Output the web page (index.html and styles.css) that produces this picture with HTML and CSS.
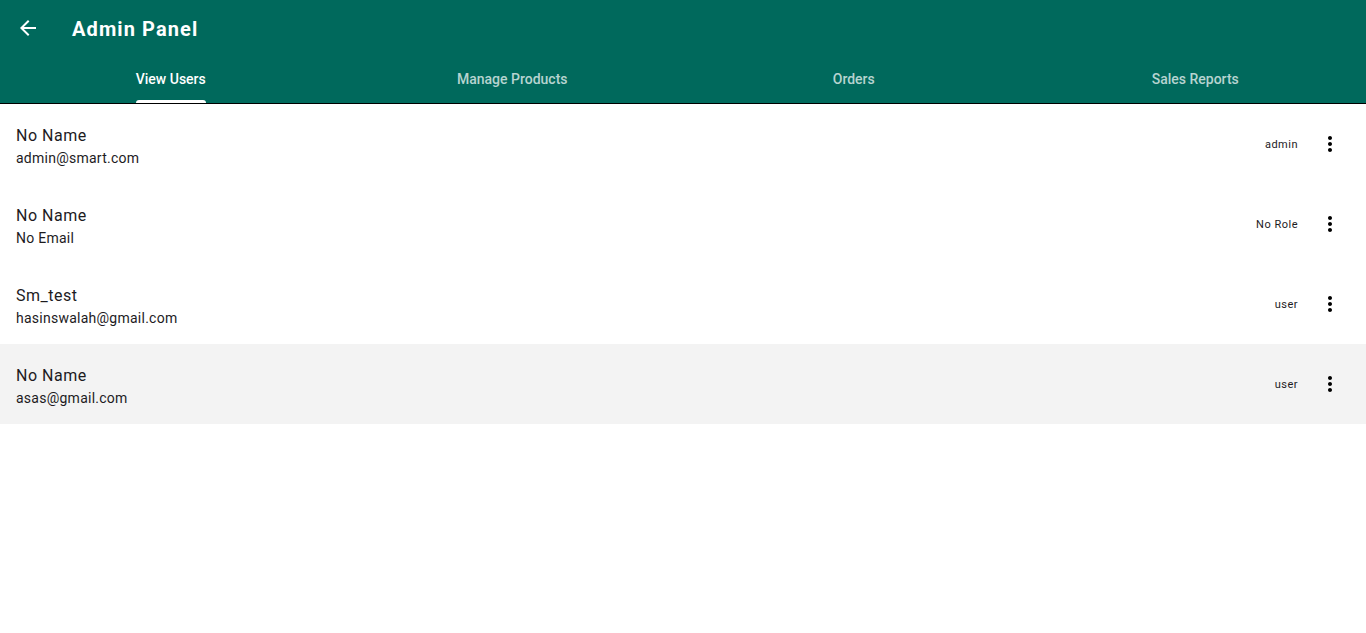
FILE: index.html
```html
<!DOCTYPE html>
<html>
<head>
<meta charset="utf-8">
<link rel="stylesheet" href="styles.css">
</head>
<body>
<header class="appbar">
  <div class="toolbar">
    <button class="back" aria-label="Back">
      <svg width="24" height="24" viewBox="0 0 24 24"><path d="M20 11H7.83l5.59-5.59L12 4l-8 8 8 8 1.41-1.41L7.83 13H20v-2z" fill="#fff"/></svg>
    </button>
    <h1 class="title">Admin Panel</h1>
  </div>
  <nav class="tabs">
    <div class="tab active"><span class="tab-label">View Users<span class="indicator"></span></span></div>
    <div class="tab"><span class="tab-label">Manage Products</span></div>
    <div class="tab"><span class="tab-label">Orders</span></div>
    <div class="tab"><span class="tab-label">Sales Reports</span></div>
  </nav>
</header>
<main class="list">
  <div class="item">
    <div class="texts"><div class="name">No Name</div><div class="email">admin@smart.com</div></div>
    <div class="role">admin</div>
    <div class="more"><svg width="24" height="24" viewBox="0 0 24 24"><path d="M12 8c1.1 0 2-.9 2-2s-.9-2-2-2-2 .9-2 2 .9 2 2 2zm0 2c-1.1 0-2 .9-2 2s.9 2 2 2 2-.9 2-2-.9-2-2-2zm0 6c-1.1 0-2 .9-2 2s.9 2 2 2 2-.9 2-2-.9-2-2-2z" fill="#000"/></svg></div>
  </div>
  <div class="item">
    <div class="texts"><div class="name">No Name</div><div class="email">No Email</div></div>
    <div class="role">No Role</div>
    <div class="more"><svg width="24" height="24" viewBox="0 0 24 24"><path d="M12 8c1.1 0 2-.9 2-2s-.9-2-2-2-2 .9-2 2 .9 2 2 2zm0 2c-1.1 0-2 .9-2 2s.9 2 2 2 2-.9 2-2-.9-2-2-2zm0 6c-1.1 0-2 .9-2 2s.9 2 2 2 2-.9 2-2-.9-2-2-2z" fill="#000"/></svg></div>
  </div>
  <div class="item">
    <div class="texts"><div class="name">Sm_test</div><div class="email">hasinswalah@gmail.com</div></div>
    <div class="role">user</div>
    <div class="more"><svg width="24" height="24" viewBox="0 0 24 24"><path d="M12 8c1.1 0 2-.9 2-2s-.9-2-2-2-2 .9-2 2 .9 2 2 2zm0 2c-1.1 0-2 .9-2 2s.9 2 2 2 2-.9 2-2-.9-2-2-2zm0 6c-1.1 0-2 .9-2 2s.9 2 2 2 2-.9 2-2-.9-2-2-2z" fill="#000"/></svg></div>
  </div>
  <div class="item hovered">
    <div class="texts"><div class="name">No Name</div><div class="email">asas@gmail.com</div></div>
    <div class="role">user</div>
    <div class="more"><svg width="24" height="24" viewBox="0 0 24 24"><path d="M12 8c1.1 0 2-.9 2-2s-.9-2-2-2-2 .9-2 2 .9 2 2 2zm0 2c-1.1 0-2 .9-2 2s.9 2 2 2 2-.9 2-2-.9-2-2-2zm0 6c-1.1 0-2 .9-2 2s.9 2 2 2 2-.9 2-2-.9-2-2-2z" fill="#000"/></svg></div>
  </div>
</main>
</body>
</html>
```
FILE: styles.css
```css
* { box-sizing: border-box; }
html, body { margin: 0; padding: 0; }
body {
  font-family: Roboto, "Liberation Sans", sans-serif;
  background: #fff;
  color: #1d1b1e;
}
.appbar {
  background: #00695c;
  border-bottom: 1px solid #000;
}
.toolbar {
  height: 56px;
  display: flex;
  align-items: center;
  padding-left: 16px;
}
.back {
  width: 24px;
  height: 24px;
  padding: 0;
  border: 0;
  background: none;
  display: flex;
  margin-right: 32px;
}
.title {
  margin: 0;
  font-size: 20px;
  font-weight: 700;
  color: #fff;
  letter-spacing: 1.1px;
  padding-top: 1px;
}
.tabs {
  display: flex;
  height: 47px;
}
.tab {
  flex: 1;
  display: flex;
  justify-content: center;
  align-items: center;
  font-size: 14px;
  font-weight: 500;
  color: rgba(255,255,255,0.72);
}
.tab.active { color: #fff; }
.tab-label {
  position: relative;
  height: 100%;
  display: flex;
  align-items: center;
  padding-bottom: 1px;
}
.indicator {
  position: absolute;
  left: 0;
  right: 0;
  bottom: 0;
  height: 3px;
  background: #fff;
  border-radius: 3px 3px 0 0;
}
.item {
  height: 80px;
  display: flex;
  align-items: center;
  padding: 0 12px 0 16px;
}
.item.hovered { background: #f3f3f3; }
.texts { flex: 1; padding-top: 4px; }
.name {
  font-size: 16px;
  line-height: 24px;
  letter-spacing: 0.5px;
  color: #1d1b1e;
}
.email {
  font-size: 14px;
  line-height: 20px;
  letter-spacing: 0.25px;
  color: #1d1b1e;
}
.role {
  font-size: 11px;
  letter-spacing: 0.5px;
  color: #1d1b1e;
  margin-right: 8px;
}
.more {
  width: 48px;
  height: 48px;
  display: flex;
  align-items: center;
  justify-content: center;
}
```
